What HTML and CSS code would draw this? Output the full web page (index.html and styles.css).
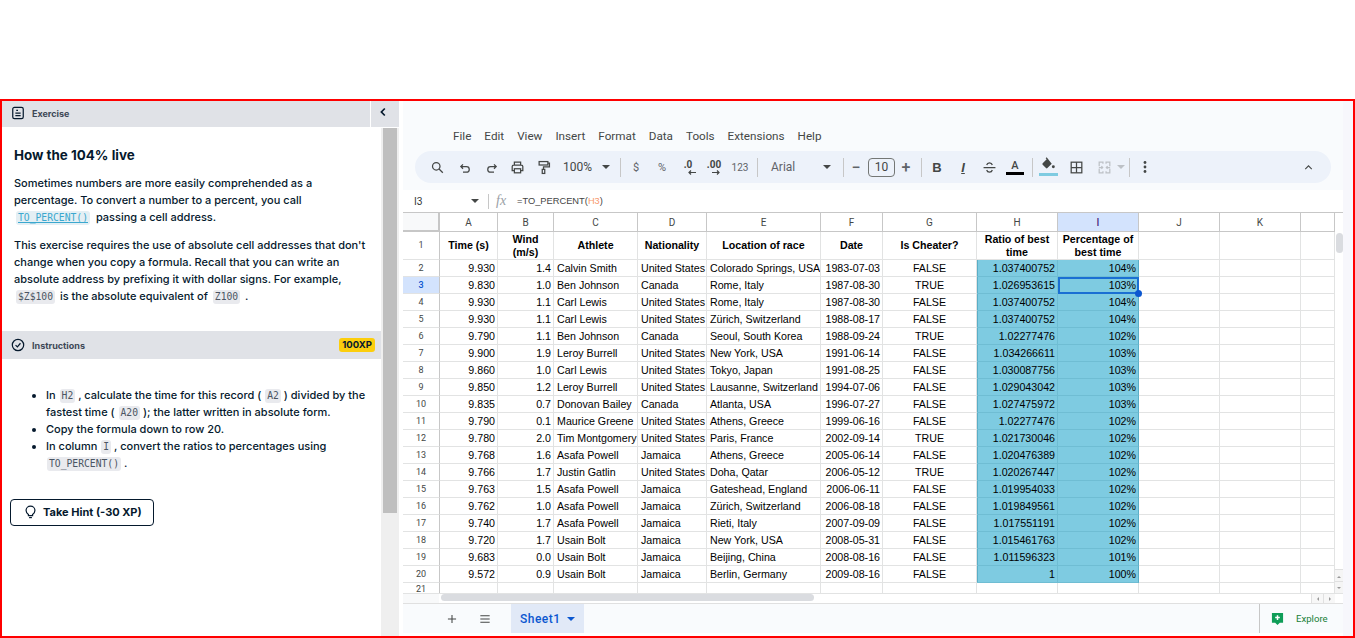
FILE: index.html
```html
<!DOCTYPE html>
<html lang="en">
<head>
    <meta charset="UTF-8">
    <meta name="viewport" content="width=device-width, initial-scale=1.0">
    <title>How the 104% live</title>
    <link rel="stylesheet" href="styles.css">
</head>
<body>
<div class="frame">
    <aside class="side">
        <div class="side-head">
            <div class="bar-title">
                <svg class="bar-icon" viewBox="0 0 16 16" fill="none" stroke="#05192d" stroke-width="1.4"><rect x="2" y="1.5" width="12" height="13" rx="2"/><path d="M6 5h2M5 8.2h6M5 11h6"/></svg>
                <span>Exercise</span>
            </div>
            <button class="collapse"><svg viewBox="0 0 10 10" width="10" height="10" fill="none" stroke="#05192d" stroke-width="1.7"><path d="M6.8 1.5 3.4 5l3.4 3.500"/></svg></button>
        </div>
        <div class="side-body">
            <div class="side-content">
                <section class="intro">
                    <h1>How the 104% live</h1>
                    <p>Sometimes numbers are more easily comprehended as a percentage. To convert a number to a percent, you call <code class="link">TO_PERCENT()</code> passing a cell address.</p>
                    <p>This exercise requires the use of absolute cell addresses that don't change when you copy a formula. Recall that you can write an absolute address by prefixing it with dollar signs. For example, <code>$Z$100</code> is the absolute equivalent of <code>Z100</code> .</p>
                </section>
                <div class="instr-head">
                    <div class="bar-title">
                        <svg class="bar-icon" viewBox="0 0 16 16" fill="none" stroke="#05192d" stroke-width="1.4"><circle cx="8" cy="8" r="6.5"/><path d="M5.2 8.2 7.3 10.2 10.8 6"/></svg>
                        <span>Instructions</span>
                    </div>
                    <span class="xp">100XP</span>
                </div>
                <ul class="steps">
                    <li>In <code>H2</code> , calculate the time for this record ( <code>A2</code> ) divided by the fastest time ( <code>A20</code> ); the latter written in absolute form.</li>
                    <li>Copy the formula down to row 20.</li>
                    <li>In column <code>I</code> , convert the ratios to percentages using <code>TO_PERCENT()</code> .</li>
                </ul>
                <button class="hint">
                    <svg viewBox="0 0 16 16" width="15" height="15" fill="none" stroke="#05192d" stroke-width="1.3"><path d="M5.8 11.2C4.4 10.2 3.3 8.9 3.3 6.9a4.7 4.7 0 0 1 9.4 0c0 2-1.100 3.300-2.500 4.300v1.100H5.800z"/><path d="M6.500 14.500h3"/></svg>
                    Take Hint (-30 XP)
                </button>
            </div>
            <div class="side-scroll"><div class="side-thumb"></div></div>
        </div>
    </aside>

    <main class="sheet">
        <div class="chrome">
            <nav class="menu">
                <span>File</span><span>Edit</span><span>View</span><span>Insert</span><span>Format</span><span>Data</span><span>Tools</span><span>Extensions</span><span>Help</span>
            </nav>
            <div class="toolbar">
                <span class="tb first"><svg class="ic" viewBox="0 0 24 24"><circle cx="10" cy="10" r="6"/><path d="m14.500 14.500 6 6"/></svg></span>
                <span class="tb"><svg class="ic" viewBox="0 0 24 24"><path d="M8 6 4.500 9.500 8 13M5 9.500h8.500a4.500 4.500 0 0 1 0 9H8" transform="translate(0 1)"/></svg></span>
                <span class="tb"><svg class="ic" viewBox="0 0 24 24"><path d="m16 6 3.500 3.500L16 13M19 9.500h-8.500a4.500 4.500 0 0 0 0 9H16" transform="translate(0 1)"/></svg></span>
                <span class="tb"><svg class="ic" viewBox="0 0 24 24"><path d="M7 8V3.500h10V8M7 17H3.500v-6.500a2.500 2.500 0 0 1 2.500-2.500h12a2.500 2.500 0 0 1 2.500 2.500V17H17"/><rect x="7" y="14" width="10" height="6.500"/></svg></span>
                <span class="tb"><svg class="ic" viewBox="0 0 24 24"><rect x="5" y="2.500" width="14" height="5.500"/><path d="M19 5h2.500v6H12v4"/><rect x="10" y="15" width="4" height="6.500"/></svg></span>
                <span class="zoom">100%</span><span class="caret"></span><span class="sep"></span>
                <span class="tb sym">$</span>
                <span class="tb sym">%</span>
                <span class="tb dec"><b>.0</b><svg class="left" viewBox="0 0 10 5" width="10" height="5"><path d="M9 2.500H2M4 .5 2 2.500l2 2"/></svg></span>
                <span class="tb dec"><b>.00</b><svg class="right" viewBox="0 0 10 5" width="10" height="5"><path d="M1 2.500h7M6 .5l2 2-2 2"/></svg></span>
                <span class="tb sym num">123</span><span class="sep"></span>
                <span class="font">Arial</span><span class="caret"></span><span class="sep"></span>
                <span class="tb sign minus">&minus;</span><span class="size">10</span><span class="tb sign">+</span><span class="sep"></span>
                <span class="tb fmt b">B</span>
                <span class="tb fmt i">I</span>
                <span class="tb"><svg class="ic" viewBox="0 0 24 24"><path d="M2.500 12h19M16.500 8c-.5-2-2.300-3.500-4.500-3.500S8 6 7.500 8M7.500 16c.5 2 2.300 3.500 4.500 3.500s4-1.500 4.500-3.500"/></svg></span>
                <span class="tb txt-color"><i>A</i><u></u></span><span class="sep"></span>
                <span class="tb fill"><svg viewBox="0 0 24 24" width="16" height="16"><path fill="#444746" d="M10 2 8.500 3.500 10 5 4 11a1.500 1.500 0 0 0 0 2.100l5 5a1.500 1.500 0 0 0 2.100 0l6.500-6.500z"/><circle cx="20" cy="16" r="2.200" fill="#444746"/></svg><u></u></span>
                <span class="tb borders"><svg class="ic" viewBox="0 0 24 24"><rect x="3.500" y="3.500" width="17" height="17"/><path d="M12 3.500v17M3.500 12h17"/></svg></span>
                <span class="tb merge"><svg class="ic" viewBox="0 0 24 24"><path d="M3.500 10V3.500h6V6M20.500 10V3.500h-6V6M3.500 14v6.500h6V18M20.500 14v6.500h-6V18M3 12h6M7 10l2 2-2 2M21 12h-6M17 10l-2 2 2 2"/></svg></span>
                <span class="caret off"></span><span class="sep"></span>
                <span class="tb"><svg viewBox="0 0 4 14" width="4" height="14" fill="#444746"><circle cx="2" cy="2.500" r="1.400"/><circle cx="2" cy="7" r="1.400"/><circle cx="2" cy="11.500" r="1.400"/></svg></span>
                <span class="tb up"><svg class="ic" viewBox="0 0 24 24"><path d="m6 15 6-6 6 6"/></svg></span>
            </div>
        </div>

        <div class="formula">
            <span class="name-box">I3</span><span class="caret"></span><span class="sep"></span>
            <span class="fx">fx</span>
            <span class="expr">=TO_PERCENT(<em>H3</em>)</span>
        </div>

        <div class="grid-area">
            <table class="grid">
                <colgroup>
                    <col class="c-head"><col class="c-a"><col class="c-b"><col class="c-c"><col class="c-d"><col class="c-e"><col class="c-f"><col class="c-g"><col class="c-n"><col class="c-n"><col class="c-n"><col class="c-n"><col class="c-l">
                </colgroup>
                <thead>
                    <tr class="letters"><th class="corner"></th><th>A</th><th>B</th><th>C</th><th>D</th><th>E</th><th>F</th><th>G</th><th>H</th><th class="picked">I</th><th>J</th><th>K</th><th></th></tr>
                </thead>
                <tbody>
                    <tr class="title"><th>1</th><td>Time (s)</td><td>Wind (m/s)</td><td>Athlete</td><td>Nationality</td><td>Location of race</td><td>Date</td><td>Is Cheater?</td><td>Ratio of best time</td><td>Percentage of best time</td><td></td><td></td><td></td></tr>
                    <tr><th>2</th><td>9.930</td><td>1.4</td><td>Calvin Smith</td><td>United States</td><td>Colorado Springs, USA</td><td>1983-07-03</td><td>FALSE</td><td>1.037400752</td><td>104%</td><td></td><td></td><td></td></tr>
                    <tr><th class="picked">3</th><td>9.830</td><td>1.0</td><td>Ben Johnson</td><td>Canada</td><td>Rome, Italy</td><td>1987-08-30</td><td>TRUE</td><td>1.026953615</td><td class="active">103%<span class="handle"></span></td><td></td><td></td><td></td></tr>
                    <tr><th>4</th><td>9.930</td><td>1.1</td><td>Carl Lewis</td><td>United States</td><td>Rome, Italy</td><td>1987-08-30</td><td>FALSE</td><td>1.037400752</td><td>104%</td><td></td><td></td><td></td></tr>
                    <tr><th>5</th><td>9.930</td><td>1.1</td><td>Carl Lewis</td><td>United States</td><td>Zürich, Switzerland</td><td>1988-08-17</td><td>FALSE</td><td>1.037400752</td><td>104%</td><td></td><td></td><td></td></tr>
                    <tr><th>6</th><td>9.790</td><td>1.1</td><td>Ben Johnson</td><td>Canada</td><td>Seoul, South Korea</td><td>1988-09-24</td><td>TRUE</td><td>1.02277476</td><td>102%</td><td></td><td></td><td></td></tr>
                    <tr><th>7</th><td>9.900</td><td>1.9</td><td>Leroy Burrell</td><td>United States</td><td>New York, USA</td><td>1991-06-14</td><td>FALSE</td><td>1.034266611</td><td>103%</td><td></td><td></td><td></td></tr>
                    <tr><th>8</th><td>9.860</td><td>1.0</td><td>Carl Lewis</td><td>United States</td><td>Tokyo, Japan</td><td>1991-08-25</td><td>FALSE</td><td>1.030087756</td><td>103%</td><td></td><td></td><td></td></tr>
                    <tr><th>9</th><td>9.850</td><td>1.2</td><td>Leroy Burrell</td><td>United States</td><td>Lausanne, Switzerland</td><td>1994-07-06</td><td>FALSE</td><td>1.029043042</td><td>103%</td><td></td><td></td><td></td></tr>
                    <tr><th>10</th><td>9.835</td><td>0.7</td><td>Donovan Bailey</td><td>Canada</td><td>Atlanta, USA</td><td>1996-07-27</td><td>FALSE</td><td>1.027475972</td><td>103%</td><td></td><td></td><td></td></tr>
                    <tr><th>11</th><td>9.790</td><td>0.1</td><td>Maurice Greene</td><td>United States</td><td>Athens, Greece</td><td>1999-06-16</td><td>FALSE</td><td>1.02277476</td><td>102%</td><td></td><td></td><td></td></tr>
                    <tr><th>12</th><td>9.780</td><td>2.0</td><td>Tim Montgomery</td><td>United States</td><td>Paris, France</td><td>2002-09-14</td><td>TRUE</td><td>1.021730046</td><td>102%</td><td></td><td></td><td></td></tr>
                    <tr><th>13</th><td>9.768</td><td>1.6</td><td>Asafa Powell</td><td>Jamaica</td><td>Athens, Greece</td><td>2005-06-14</td><td>FALSE</td><td>1.020476389</td><td>102%</td><td></td><td></td><td></td></tr>
                    <tr><th>14</th><td>9.766</td><td>1.7</td><td>Justin Gatlin</td><td>United States</td><td>Doha, Qatar</td><td>2006-05-12</td><td>TRUE</td><td>1.020267447</td><td>102%</td><td></td><td></td><td></td></tr>
                    <tr><th>15</th><td>9.763</td><td>1.5</td><td>Asafa Powell</td><td>Jamaica</td><td>Gateshead, England</td><td>2006-06-11</td><td>FALSE</td><td>1.019954033</td><td>102%</td><td></td><td></td><td></td></tr>
                    <tr><th>16</th><td>9.762</td><td>1.0</td><td>Asafa Powell</td><td>Jamaica</td><td>Zürich, Switzerland</td><td>2006-08-18</td><td>FALSE</td><td>1.019849561</td><td>102%</td><td></td><td></td><td></td></tr>
                    <tr><th>17</th><td>9.740</td><td>1.7</td><td>Asafa Powell</td><td>Jamaica</td><td>Rieti, Italy</td><td>2007-09-09</td><td>FALSE</td><td>1.017551191</td><td>102%</td><td></td><td></td><td></td></tr>
                    <tr><th>18</th><td>9.720</td><td>1.7</td><td>Usain Bolt</td><td>Jamaica</td><td>New York, USA</td><td>2008-05-31</td><td>FALSE</td><td>1.015461763</td><td>102%</td><td></td><td></td><td></td></tr>
                    <tr><th>19</th><td>9.683</td><td>0.0</td><td>Usain Bolt</td><td>Jamaica</td><td>Beijing, China</td><td>2008-08-16</td><td>FALSE</td><td>1.011596323</td><td>101%</td><td></td><td></td><td></td></tr>
                    <tr><th>20</th><td>9.572</td><td>0.9</td><td>Usain Bolt</td><td>Jamaica</td><td>Berlin, Germany</td><td>2009-08-16</td><td>FALSE</td><td>1</td><td>100%</td><td></td><td></td><td></td></tr>
                    <tr class="blank"><th>21</th><td></td><td></td><td></td><td></td><td></td><td></td><td></td><td></td><td></td><td></td><td></td><td></td></tr>
                </tbody>
            </table>
            <div class="v-scroll">
                <div class="v-thumb"></div>
                <div class="v-btns"><span class="tri-up"></span><span class="tri-down"></span></div>
            </div>
        </div>

        <div class="h-scroll">
            <div class="h-corner"></div>
            <div class="h-track"><div class="h-thumb"></div></div>
            <div class="h-btns"><span class="tri-left"></span><span class="tri-right"></span></div>
        </div>

        <div class="tabs">
            <span class="tab-icon"><svg class="ic" viewBox="0 0 24 24"><path d="M12 5v14M5 12h14"/></svg></span>
            <span class="tab-icon"><svg class="ic" viewBox="0 0 24 24"><path d="M4 6.500h16M4 12h16M4 17.500h16"/></svg></span>
            <div class="tab"><span>Sheet1</span><span class="caret blue"></span></div>
            <div class="explore">
                <svg viewBox="0 0 14 15" width="13" height="14"><path fill="#0f9d58" d="M1 1h12v10.500H9.500L7 14l-2.500-2.500H1z"/><path stroke="#fff" stroke-width="1.600" d="M7 3.500v5M4.500 6h5"/></svg>
                <span>Explore</span>
            </div>
        </div>
    </main>
    <div class="edge"></div>
</div>
</body>
</html>
```

FILE: styles.css
```css
* {
    box-sizing: border-box;
}
body {
    margin: 0;
    background: white;
    font-family: Inter, sans-serif;
    color: #05192d;
}
.frame {
    display: flex;
    height: 539px;
    margin-top: 99px;
    border: 2px solid #f00;
    overflow: hidden;
}

/* left panel */
.side {
    width: 397px;
    flex: none;
    display: flex;
    flex-direction: column;
}
.side-head {
    height: 26px;
    flex: none;
    margin-bottom: 1px;
    display: flex;
    justify-content: space-between;
}
.bar-title {
    display: flex;
    align-items: center;
    gap: 7px;
    padding-left: 9px;
    font-size: 9px;
    font-weight: 700;
    color: #3d4756;
}
.bar-icon {
    width: 14px;
    height: 14px;
}
.side-head .bar-title {
    flex: 1;
    padding-bottom: 2px;
    background: #e0e2e7;
}
.collapse {
    width: 28px;
    margin-left: 1px;
    padding: 0 4px 4px 0;
    border: none;
    background: #e0e2e7;
}
.side-body {
    flex: 1;
    display: flex;
    min-height: 0;
}
.side-content {
    width: 379px;
    flex: none;
}
.intro {
    height: 203px;
    padding: 18px 12px 0;
    font-size: 11px;
    font-weight: 500;
    line-height: 17px;
}
.intro h1 {
    margin: 0 0 11px;
    font-size: 13.4px;
    line-height: 18px;
    font-weight: 700;
}
.intro p {
    margin: 0 0 11px;
}
code {
    display: inline-block;
    padding: 0 2px;
    margin: 0 2px;
    font-family: "DejaVu Sans Mono", monospace;
    font-size: 9.7px;
    font-weight: 400;
    line-height: 14px;
    color: #4b5563;
    background: #e9eaee;
    border-radius: 3px;
}
code.link {
    margin-right: 3px;
    color: #3ba8cf;
    background: #e4eff4;
    text-decoration: underline;
}
.instr-head {
    height: 28px;
    display: flex;
    justify-content: space-between;
    align-items: center;
    padding-right: 6px;
    background: #e0e2e7;
}
.xp {
    height: 14px;
    padding: 0 3px;
    font-size: 9.5px;
    font-weight: 700;
    line-height: 14px;
    background: #fcce0d;
    border-radius: 3px;
}
.steps {
    margin: 28px 8px 0 0;
    padding-left: 44px;
    font-size: 11px;
    font-weight: 500;
    line-height: 17px;
}
.steps code {
    margin: 0 0 0 1px;
}
.hint {
    display: flex;
    align-items: center;
    gap: 5px;
    width: 144px;
    height: 27px;
    margin: 27px 0 0 8px;
    padding: 0 0 2px 12px;
    font-family: Inter, sans-serif;
    font-size: 11px;
    font-weight: 700;
    color: #05192d;
    background: white;
    border: 1px solid #05192d;
    border-radius: 4px;
}
.side-scroll {
    width: 18px;
    flex: none;
    padding: 0 2px;
    background: #efefef;
}
.side-thumb {
    height: 385px;
    background: #bfbfbf;
}

/* spreadsheet */
.sheet {
    width: 944px;
    flex: none;
    display: flex;
    flex-direction: column;
    padding-left: 4px;
    font-family: Roboto, sans-serif;
    color: #444746;
}
.chrome {
    height: 89px;
    flex: none;
    padding: 0 12px;
    background: #f9fbfd;
}
.menu {
    display: flex;
    gap: 13px;
    height: 50px;
    padding: 27px 0 0 38px;
    font-size: 11.7px;
    line-height: 16px;
}
.toolbar {
    display: flex;
    align-items: center;
    width: 916px;
    height: 32px;
    padding-left: 9px;
    background: #edf2fa;
    border-radius: 16px;
}
.tb {
    width: 26px;
    height: 26px;
    flex: none;
    display: flex;
    flex-direction: column;
    align-items: center;
    justify-content: center;
}
.tb.first, .fill, .borders {
    margin-right: 2px;
}
.ic {
    width: 15px;
    height: 15px;
    fill: none;
    stroke: #444746;
    stroke-width: 2;
}
.zoom {
    width: 46px;
    flex: none;
    padding-left: 7px;
    font-size: 12px;
}
.caret {
    width: 0;
    height: 0;
    flex: none;
    margin-right: 6px;
    border: 4px solid transparent;
    border-top-color: #444746;
    border-bottom: 0;
}
.sep {
    width: 1px;
    height: 19px;
    flex: none;
    margin: 0 2px 0 4px;
    background: #c7c7c7;
}
.sym {
    font-size: 11px;
    color: #5f6368;
}
.num {
    font-size: 10px;
}
.dec {
    font-size: 10px;
    line-height: 9px;
}
.dec b {
    font-weight: 700;
    margin-bottom: 1px;
}
.dec svg {
    fill: none;
    stroke: #444746;
    stroke-width: 1.200;
}
.dec .left {
    margin-left: 7px;
}
.dec .right {
    margin-left: 4px;
}
.font {
    width: 57px;
    flex: none;
    margin-left: 6px;
    padding-left: 5px;
    font-size: 12px;
    color: #5f6368;
}
.font + .caret {
    margin-right: 8px;
}
.sign {
    width: 22px;
    font-size: 16px;
    font-weight: 500;
    color: #5f6368;
}
.minus {
    width: 20px;
    margin-right: 2px;
}
.size {
    width: 27px;
    height: 19px;
    flex: none;
    font-size: 12px;
    line-height: 17px;
    text-align: center;
    border: 1px solid #747775;
    border-radius: 4px;
}
.fmt {
    font-family: "Liberation Sans", sans-serif;
    font-size: 13px;
}
.fmt.b {
    font-weight: 700;
}
.fmt.i {
    font-style: italic;
    font-weight: 700;
    text-decoration: underline;
}
.txt-color i {
    font-size: 11px;
    font-style: normal;
    font-weight: 500;
    line-height: 12px;
}
.txt-color u {
    display: block;
    width: 18px;
    height: 3px;
    background: #000;
}
.fill svg {
    margin-top: -2px;
}
.fill u {
    display: block;
    width: 19px;
    height: 3px;
    margin-top: 1px;
    background: #7ecbe1;
}
.merge .ic {
    stroke: #bdc1c6;
}
.caret.off {
    margin-right: 0;
    border-top-color: #bdc1c6;
}
.up {
    margin-left: 137px;
}
.up .ic {
    width: 13px;
    height: 13px;
}
.formula {
    height: 22px;
    flex: none;
    display: flex;
    align-items: center;
    background: white;
    font-family: "Liberation Sans", sans-serif;
    font-size: 10px;
}
.name-box {
    width: 68px;
    flex: none;
    padding-left: 11px;
    color: #333;
}
.formula .caret {
    margin-right: 0;
}
.formula .sep {
    margin: 0 7px 0 9px;
    height: 15px;
}
.fx {
    width: 21px;
    font-family: "Liberation Serif", serif;
    font-style: italic;
    font-size: 14px;
    color: #9aa0a6;
}
.expr {
    font-size: 9.3px;
    color: #444;
}
.expr em {
    font-style: normal;
    color: #f79a6d;
}
.grid-area {
    height: 381px;
    flex: none;
    display: flex;
    overflow: hidden;
    border-top: 1px solid #c7c7c7;
}
.grid {
    table-layout: fixed;
    width: 932px;
    height: 0;
    flex: none;
    border-collapse: separate;
    border-spacing: 0;
    font-family: "Liberation Sans", sans-serif;
    font-size: 10.670px;
    color: #000;
}
.c-head { width: 37px; }
.c-a { width: 58px; }
.c-b { width: 56px; }
.c-c { width: 84px; }
.c-d { width: 69px; }
.c-e { width: 114px; }
.c-f { width: 62px; }
.c-g { width: 94px; }
.c-n { width: 81px; }
.c-l { width: 34px; }
.grid th, .grid td {
    height: 17px;
    padding: 0 2px;
    border-right: 1px solid #e2e3e3;
    border-bottom: 1px solid #e2e3e3;
    line-height: 13px;
    white-space: nowrap;
    overflow: hidden;
}
.grid th {
    font-family: Roboto, sans-serif;
    font-size: 9px;
    font-weight: 400;
    color: #444746;
    background: white;
}
.letters th {
    height: 19px;
    font-size: 10px;
    border-color: #c7c7c7;
}
.grid tbody th {
    border-right: 1px solid #c7c7c7;
    line-height: 13px;
}
.grid th.corner {
    background: #f8f9fa;
    border-right: 2px solid #c7c7c7;
    border-bottom: 2px solid #c7c7c7;
}
.grid th.picked {
    background: #d3e3fd;
    color: #0b57d0;
    font-weight: 500;
}
.letters th.picked {
    color: #4a2a80;
}
.grid tr.title th, .grid tr.title td {
    height: 28px;
    white-space: normal;
    text-align: center;
    font-weight: 700;
    line-height: 13px;
}
.grid tr.title th {
    font-weight: 400;
}
.grid tr.blank th, .grid tr.blank td {
    height: 11px;
    padding-top: 1px;
    line-height: 10px;
    border-bottom: 0;
}
.grid td {
    padding-left: 3px;
}
.grid tr.title td, .grid td:nth-child(8) {
    padding-left: 2px;
}
.grid td:nth-child(2), .grid td:nth-child(3), .grid td:nth-child(7), .grid td:nth-child(9), .grid td:nth-child(10) {
    text-align: right;
}
.grid td:nth-child(8) {
    text-align: center;
}
.grid tbody tr:not(.title):not(.blank) td:nth-child(9),
.grid tbody tr:not(.title):not(.blank) td:nth-child(10) {
    background: #7ecbe1;
    border-color: #6fbdd3;
}
.grid tbody tr:not(.title):not(.blank) td:nth-child(9) {
    box-shadow: inset 1px 0 #5aaec6;
}
.grid tbody tr:not(.title):not(.blank) td:nth-child(10) {
    border-right-color: #5aaec6;
}
.grid tbody tr:nth-child(20) td:nth-child(9),
.grid tbody tr:nth-child(20) td:nth-child(10) {
    border-bottom-color: #5aaec6;
}
.grid td.active {
    position: relative;
    overflow: visible;
    outline: 2px solid #1a6fd3;
    outline-offset: -2px;
}
.handle {
    position: absolute;
    right: -4px;
    bottom: -4px;
    width: 7px;
    height: 7px;
    background: #0b57d0;
    border-radius: 50%;
}
.v-scroll {
    width: 8px;
    flex: none;
    display: flex;
    flex-direction: column;
    justify-content: space-between;
    padding-top: 20px;
    background: white;
}
.v-thumb {
    height: 20px;
    margin-left: 1px;
    background: #dadce0;
    border-radius: 4px;
}
.v-btns span {
    display: block;
    height: 12px;
    background: #f5f5f5;
    border-top: 1px solid #e0e0e0;
}
.tri-up, .tri-down, .tri-left, .tri-right {
    position: relative;
}
.tri-up::after, .tri-down::after, .tri-left::after, .tri-right::after {
    content: "";
    position: absolute;
    left: 2px;
    top: 4px;
    border: 2px solid transparent;
}
.tri-up::after { border-bottom-color: #999; }
.tri-down::after { border-top-color: #999; top: 5px; }
.tri-left::after { border-right-color: #999; left: 3px; top: 3px; }
.tri-right::after { border-left-color: #999; left: 5px; top: 3px; }
.h-scroll {
    height: 11px;
    flex: none;
    display: flex;
    background: white;
    border-top: 1px solid #e2e3e3;
    border-bottom: 1px solid #e0e0e0;
}
.h-corner {
    width: 36px;
    flex: none;
    background: #f8f9fa;
}
.h-track {
    flex: 1;
    padding: 0 0 0 2px;
}
.h-thumb {
    width: 373px;
    height: 7px;
    background: #dadce0;
    border-radius: 4px;
}
.h-btns {
    display: flex;
    width: 24px;
    flex: none;
    margin-right: 8px;
}
.h-btns span {
    flex: none;
    width: 12px;
    background: #f7f7f7;
    border-left: 1px solid #e0e0e0;
}
.tabs {
    height: 29px;
    flex: none;
    display: flex;
    align-items: center;
    padding-left: 42px;
    background: #f9fbfd;
}
.tab-icon {
    width: 33px;
    display: flex;
}
.tabs .ic {
    width: 14px;
    height: 14px;
    stroke-width: 1.800;
}
.tab {
    height: 29px;
    width: 73px;
    display: flex;
    align-items: center;
    gap: 6px;
    padding-left: 9px;
    font-size: 12px;
    font-weight: 500;
    letter-spacing: .5px;
    color: #0b57d0;
    background: #e1e9f7;
}
.caret.blue {
    margin-right: 0;
    border-top-color: #0b57d0;
}
.explore {
    display: flex;
    align-items: center;
    gap: 12px;
    height: 29px;
    margin-left: auto;
    width: 84px;
    padding-left: 11px;
    font-size: 9.6px;
    color: #188038;
    border-left: 1px solid #c7c7c7;
}
.edge {
    flex: 1;
    background: #f7f7fc;
}
```
